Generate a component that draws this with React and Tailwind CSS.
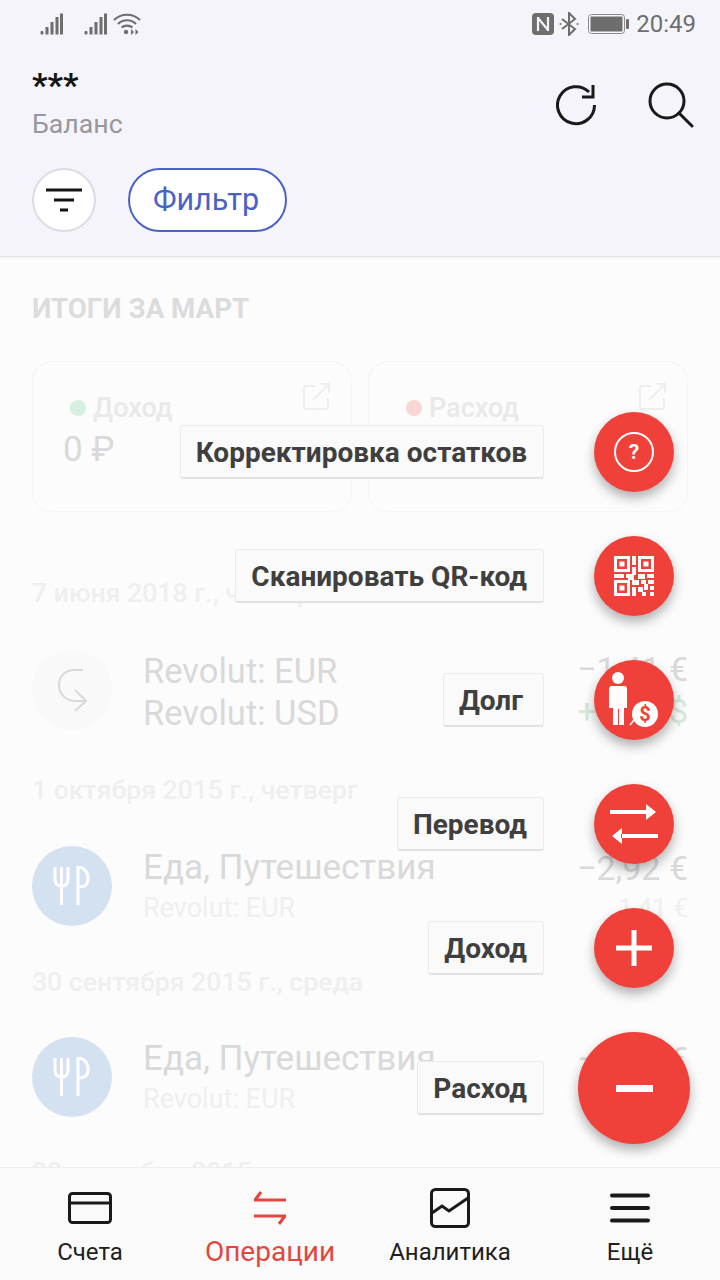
import React from 'react'

const FONT = "font-['Roboto','Noto_Sans',sans-serif]"

function Signal() {
  return (
    <svg width="24" height="24" viewBox="0 0 24 24" fill="#6e6e6e">
      <rect x="0.5" y="19" width="3" height="3.5" rx="1" />
      <rect x="5.5" y="15" width="3" height="7.5" />
      <rect x="10.5" y="10" width="3" height="12.5" />
      <rect x="15.5" y="5" width="3" height="17.5" />
      <rect x="20" y="1.5" width="3" height="21" />
    </svg>
  )
}

function Wifi() {
  return (
    <svg className="ml-[5px]" width="28" height="24" viewBox="0 0 28 24" fill="none" stroke="#6e6e6e" strokeWidth="2.2">
      <path d="M1 8c7-7 19-7 26 0" />
      <path d="M5 12c5-5 13-5 18 0" />
      <path d="M8.5 15.500c3-2.500 8-2.500 11 0" />
      <circle cx="13" cy="20" r="2.200" fill="#6e6e6e" stroke="none" />
      <path d="M21 20l-3-3v6z M22.500 17l3 3-3 3z" fill="#6e6e6e" stroke="none" />
    </svg>
  )
}

function StatusBar() {
  return (
    <div className="flex h-12 items-center justify-between pl-10 pr-6">
      <div className="flex items-center">
        <Signal />
        <div className="ml-5"><Signal /></div>
        <Wifi />
      </div>
      <div className="flex items-center">
        <svg width="22" height="22" viewBox="0 0 22 22">
          <rect width="22" height="22" rx="4" fill="#6e6e6e" />
          <path d="M6 4v14M16 4v14M6 5l10 12" fill="none" stroke="#f4f4fa" strokeWidth="2.200" />
        </svg>
        <svg className="ml-[5px]" width="20" height="24" viewBox="0 0 20 24" fill="none" stroke="#6e6e6e" strokeWidth="2">
          <path d="M3 7l13 10-6 6V1l6 6-13 10" />
          <circle cx="1.500" cy="12" r="1" fill="#6e6e6e" stroke="none" />
          <circle cx="18.500" cy="12" r="1" fill="#6e6e6e" stroke="none" />
        </svg>
        <svg className="ml-[9px]" width="41" height="20" viewBox="0 0 41 20">
          <rect x="0.500" y="0.500" width="36" height="19" rx="3" fill="none" stroke="#8a8a8a" />
          <rect x="2.500" y="2.500" width="32" height="15" rx="1" fill="#6e6e6e" />
          <rect x="38" y="5" width="3" height="10" rx="1" fill="#6e6e6e" />
        </svg>
        <span className="ml-[7px] text-[24px] leading-none text-[#6e6e6e]">20:49</span>
      </div>
    </div>
  )
}

function Header() {
  return (
    <header className="h-[257px] shrink-0 border-b border-[#e4e4e8] bg-[#f4f4fa] shadow-[0_1px_2px_rgba(0,0,0,0.05)]">
      <StatusBar />
      <div className="flex items-start justify-between pl-8 pr-[26px] pt-[17px]">
        <div>
          <div className="mb-[3px] text-[34px] font-bold leading-[40px] text-[#141414]">***</div>
          <div className="text-[26.700px] leading-[32px] text-[#97979d]">Баланс</div>
        </div>
        <div className="flex items-center gap-[50px] pt-[17px]">
          <svg width="42" height="42" viewBox="0 0 42 42" fill="none" stroke="#1a1a1a" strokeWidth="3">
            <path d="M38.500 21A18.500 18.500 0 1 1 33 8" />
            <path d="M37 1v12H26" />
          </svg>
          <svg width="46" height="46" viewBox="0 0 46 46" fill="none" stroke="#1a1a1a" strokeWidth="3" strokeLinecap="round">
            <circle cx="19" cy="19" r="17" />
            <path d="M31 31l13 13" />
          </svg>
        </div>
      </div>
      <div className="mt-[28px] flex items-center gap-8 pl-8">
        <div className="flex h-16 w-16 items-center justify-center rounded-full border-2 border-[#dcdce8] bg-white">
          <svg width="36" height="26" viewBox="0 0 36 26" stroke="#141414" strokeWidth="3">
            <path d="M0 3h36M8 13h20M14 23h8" />
          </svg>
        </div>
        <div className="flex h-16 w-[159px] items-center justify-center rounded-full border-2 border-[#4a62c4] bg-white pr-[3px] text-[30.500px] text-[#4a62c4]">
          Фильтр
        </div>
      </div>
    </header>
  )
}

function ExternalIcon() {
  return (
    <svg width="28" height="28" viewBox="0 0 28 28" fill="none" stroke="#eeeeee" strokeWidth="2">
      <path d="M13 3H4a2 2 0 0 0-2 2v19a2 2 0 0 0 2 2h20a2 2 0 0 0 2-2v-9" />
      <path d="M11 17L27 1M18 1h9v9" />
    </svg>
  )
}

function SummaryCard({ dot, title, value }) {
  return (
    <div className="relative h-[151px] flex-1 rounded-[20px] border border-[#f5f5f5] pl-[30px] pt-[28px]">
      <div className="absolute right-[21px] top-[21px]"><ExternalIcon /></div>
      <div className="flex items-center gap-[7px] pl-[7px]">
        <span className={`h-4 w-4 rounded-full ${dot}`} />
        <span className="text-[27px] font-medium leading-[36px] text-[#e9e9e9]">{title}</span>
      </div>
      <div className="mt-[1px] text-[35px] leading-[46px] text-[#d9d9d9]">{value}</div>
    </div>
  )
}

function DateLine({ children, className }) {
  return <div className={`text-[26.600px] font-medium leading-8 text-[#efefef] ${className}`}>{children}</div>
}

function ForkKnife() {
  return (
    <svg width="38" height="40" viewBox="0 0 38 40" fill="none" stroke="#ffffff" strokeWidth="3">
      <path d="M2 1v12c0 5 3 7 6.500 7S15 18 15 13V1M8.500 1v38" />
      <path d="M25 39V1c6 0 10 5 10 11s-2 9-10 9" />
    </svg>
  )
}

function FoodRow({ amount, second, className }) {
  return (
    <div className={`flex h-20 items-center ${className}`}>
      <div className="flex h-20 w-20 items-center justify-center rounded-full bg-[#d3e1f1]"><ForkKnife /></div>
      <div className="ml-[31px] flex-1">
        <div className="text-[35px] leading-[44px] text-[#d9d9d9]">Еда, Путешествия</div>
        <div className="text-[27px] leading-[36px] text-[#efefef]">Revolut: EUR</div>
      </div>
      <div className="text-right">
        <div className="text-[34px] leading-[44px] text-[#d9d9d9]">{amount}</div>
        <div className="text-[26px] leading-[36px] text-[#efefef]">{second}</div>
      </div>
    </div>
  )
}

function TransferRow() {
  return (
    <div className="mt-[41px] flex h-20 items-center">
      <div className="flex h-20 w-20 items-center justify-center rounded-full bg-[#f9f9f9]">
        <svg width="30" height="44" viewBox="0 0 30 44" fill="none" stroke="#d9d9d9" strokeWidth="2">
          <path d="M26 2H18C8 2 2 8 2 17c0 9 7 16 16 16h10" />
          <path d="M18 22l11 11-11 10" />
        </svg>
      </div>
      <div className="ml-[31px] flex-1 pt-[4px] text-[34.500px] leading-[42px] text-[#d9d9d9]">
        <div>Revolut: EUR</div>
        <div>Revolut: USD</div>
      </div>
      <div className="text-right text-[34px] leading-[42px]">
        <div className="text-[#d9d9d9]">−1,41 €</div>
        <div className="text-[#d5ead8]">+1,60 $</div>
      </div>
    </div>
  )
}

function Fab({ large, children }) {
  return (
    <div className={`flex shrink-0 items-center justify-center rounded-full bg-[#ef4139] shadow-[0_6px_12px_rgba(0,0,0,0.3)] ${large ? 'h-[112px] w-[112px]' : 'h-20 w-20'}`}>
      {children}
    </div>
  )
}

function FabRow({ label, large, wide, children }) {
  return (
    <div className={`flex items-center justify-end ${large ? 'gap-[34px] pr-[30px]' : 'gap-[50px] pr-[46px]'}`}>
      <div className={`flex h-[54px] items-center rounded-[3px] border border-[#ececec] border-b-2 border-b-[#e2e2e2] bg-[#fafafa] pl-[15px] pt-[3px] text-[28px] font-bold text-[#3f3f3f] ${wide ? 'pr-[20px]' : 'pr-[16px]'}`}>
        {label}
      </div>
      <Fab large={large}>{children}</Fab>
    </div>
  )
}

function QrIcon() {
  return (
    <svg width="40" height="40" viewBox="0 0 40 40" fill="#ffffff">
      <path fillRule="evenodd" d="M0 1a1 1 0 0 1 1-1h15v16H0zM3 3v10h10V3zM24 0h16v16H24zM27 3v10h10V3zM0 24h16v16H1a1 1 0 0 1-1-1zM3 27v10h10V27z" />
      <rect x="5.500" y="5.500" width="5" height="5" />
      <rect x="29.500" y="5.500" width="5" height="5" />
      <rect x="5.500" y="29.500" width="5" height="5" />
      <path d="M18 0h4v9h-4zM0 18h10v4H0zM12 18h8v4h-8zM18 11h4v8h-4zM14 20h6v4h-6zM24 18h7v5h-7zM33 18h7v4h-7zM18 24h7v5h-7zM27 24h5v4h-5zM34 24h6v4h-6zM18 31h4v9h-4zM24 31h5v5h-5zM30 28h4v6h-4zM36 30h4v4h-4zM28 36h4v4h-4zM36 36h4v4h-4z" />
    </svg>
  )
}

function DebtIcon() {
  return (
    <svg width="50" height="56" viewBox="0 0 50 56" fill="#ffffff">
      <circle cx="9" cy="6" r="6" />
      <path d="M3 14h12a3 3 0 0 1 3 3v19h-3v17h-5V37H9v16H4V36H0V17a3 3 0 0 1 3-3z" />
      <path d="M21 53l7-9" stroke="#ffffff" strokeWidth="1.500" />
      <circle cx="36" cy="42" r="13" />
      <text x="36" y="49" textAnchor="middle" fontSize="20" fontWeight="700" fill="#ef4139">$</text>
    </svg>
  )
}

function FabMenu() {
  return (
    <div className="absolute right-0 top-[412px] flex w-full flex-col gap-[44px]">
      <FabRow label="Корректировка остатков">
        <div className="flex h-10 w-10 items-center justify-center rounded-full border-2 border-white text-[21px] font-bold leading-none text-white">?</div>
      </FabRow>
      <FabRow label="Сканировать QR-код"><QrIcon /></FabRow>
      <FabRow label="Долг" wide><DebtIcon /></FabRow>
      <FabRow label="Перевод">
        <svg width="48" height="40" viewBox="0 0 48 40" fill="#ffffff">
          <path d="M0 6h37v4H0zM36 0l10 8-10 8zM11 30h37v4H11zM12 24L2 32l10 8z" />
        </svg>
      </FabRow>
      <FabRow label="Доход">
        <svg width="36" height="36" viewBox="0 0 36 36" fill="#ffffff"><path d="M15.500 0h5v15.500H36v5H20.500V36h-5V20.500H0v-5h15.500z" /></svg>
      </FabRow>
      <FabRow label="Расход" large>
        <div className="h-[7px] w-[37px] bg-white" />
      </FabRow>
    </div>
  )
}

function NavItem({ icon, label, active }) {
  return (
    <div className="flex flex-1 flex-col items-center">
      <div className="flex h-[46px] items-center justify-center">{icon}</div>
      <div className={active ? 'mt-[2px] text-[28px] leading-[38px] text-[#e2473f]' : 'mt-[2px] text-[24px] leading-[38px] text-[#1f1f1f]'}>{label}</div>
    </div>
  )
}

function BottomNav() {
  return (
    <nav className="flex h-[113px] shrink-0 border-t border-[#eeeeee] bg-[#fafafa] pt-[17px]">
      <NavItem
        label="Счета"
        icon={
          <svg width="44" height="32" viewBox="0 0 44 32" fill="none" stroke="#1a1a1a" strokeWidth="3">
            <rect x="1.500" y="1.500" width="41" height="29" rx="3" />
            <path d="M1.500 11h41" />
          </svg>
        }
      />
      <NavItem
        active
        label="Операции"
        icon={
          <svg width="32" height="34" viewBox="0 0 32 34" fill="none" stroke="#e2473f" strokeWidth="3">
            <path d="M32 9H1l6-8M0 25h31l-6 8" />
          </svg>
        }
      />
      <NavItem
        label="Аналитика"
        icon={
          <svg width="40" height="40" viewBox="0 0 40 40" fill="none" stroke="#1a1a1a" strokeWidth="3">
            <rect x="1.500" y="1.500" width="37" height="37" rx="4" />
            <path d="M2 25l10-7 7 5 19-13" />
          </svg>
        }
      />
      <NavItem
        label="Ещё"
        icon={
          <svg width="40" height="30" viewBox="0 0 40 30" stroke="#1a1a1a" strokeWidth="4" strokeLinecap="round">
            <path d="M2 2.500h36M2 15h36M2 27.500h36" />
          </svg>
        }
      />
    </nav>
  )
}

export default function App() {
  return (
    <div className={`relative flex h-[1280px] w-[720px] flex-col overflow-hidden bg-[#fcfcfc] ${FONT}`}>
      <Header />
      <main className="min-h-0 flex-1 overflow-hidden px-8 pt-[36px]">
        <div className="text-[27.700px] font-bold leading-8 text-[#dcdcdc]">ИТОГИ ЗА МАРТ</div>
        <div className="mt-[36px] flex gap-4">
          <SummaryCard dot="bg-[#d5f0e0]" title="Доход" value="0 ₽" />
          <SummaryCard dot="bg-[#f9d5d3]" title="Расход" value="0 ₽" />
        </div>
        <DateLine className="mt-[65px]">7 июня 2018 г., четверг</DateLine>
        <TransferRow />
        <DateLine className="mt-[44px]">1 октября 2015 г., четверг</DateLine>
        <FoodRow className="mt-[40px]" amount="−2,92 €" second="1,41 €" />
        <DateLine className="mt-[40px]">30 сентября 2015 г., среда</DateLine>
        <FoodRow className="mt-[39px]" amount="−2,92 €" second="1,41 €" />
        <DateLine className="mt-[39px]">28 сентября 2015 г., понедельник</DateLine>
      </main>
      <BottomNav />
      <FabMenu />
    </div>
  )
}
